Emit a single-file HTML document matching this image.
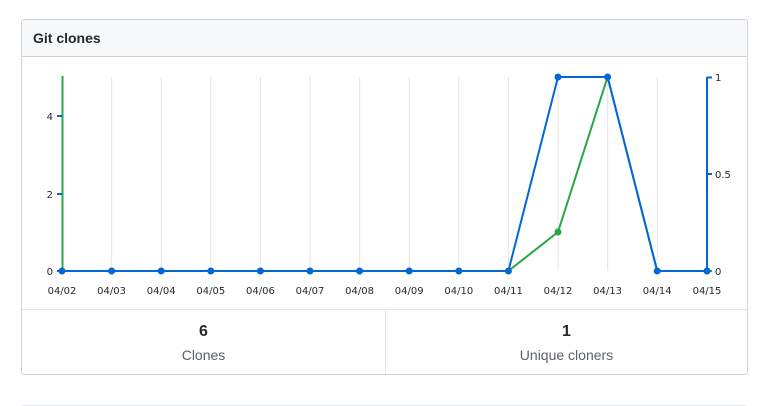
<!DOCTYPE html>
<html><head><meta charset="utf-8"><style>
body{margin:0;background:#fff;font-family:"Liberation Sans",sans-serif;}
.box{position:absolute;left:21px;top:19px;width:725px;height:354px;border:1px solid #d1d5da;border-radius:3px;overflow:hidden}
.hd{height:36px;background:#f6f8fa;border-bottom:1px solid #d1d5da;font-weight:bold;font-size:14px;color:#24292e;line-height:36px;padding-left:11px}
.stat{position:absolute;top:289px;height:65px;border-top:1px solid #e1e4e8;text-align:center;width:363px}
.stat b{display:block;font-size:16px;color:#24292e;margin-top:13px}
.stat span{display:block;font-size:14px;color:#586069;margin-top:6px}
</style></head><body>
<div class="box"><div class="hd">Git clones</div>
<div class="stat" style="left:0;border-right:1px solid #e1e4e8"><b>6</b><span>Clones</span></div>
<div class="stat" style="left:364px;width:361px"><b>1</b><span>Unique cloners</span></div>
</div>
<div style="position:absolute;left:21px;top:405px;width:726px;height:1px;background:#e1e4e8"></div>
<svg width="777" height="406" style="position:absolute;left:0;top:0" font-family="DejaVu Sans,sans-serif" font-size="10">
<g stroke="#e6e6e6" stroke-width="1">
<line x1="111.6" y1="77" x2="111.6" y2="271"/><line x1="161.2" y1="77" x2="161.2" y2="271"/><line x1="210.8" y1="77" x2="210.8" y2="271"/><line x1="260.4" y1="77" x2="260.4" y2="271"/><line x1="310" y1="77" x2="310" y2="271"/><line x1="359.6" y1="77" x2="359.6" y2="271"/><line x1="409.2" y1="77" x2="409.2" y2="271"/><line x1="458.8" y1="77" x2="458.8" y2="271"/><line x1="508.4" y1="77" x2="508.4" y2="271"/><line x1="558" y1="77" x2="558" y2="271"/><line x1="607.6" y1="77" x2="607.6" y2="271"/><line x1="657.2" y1="77" x2="657.2" y2="271"/>
</g>
<line x1="62.5" y1="76" x2="62.5" y2="271" stroke="#28a745" stroke-width="2"/>
<g stroke="#0366d6" stroke-width="2"><line x1="57" y1="116" x2="62" y2="116"/><line x1="57" y1="194" x2="62" y2="194"/><line x1="57" y1="271" x2="62" y2="271"/>
<line x1="707" y1="77" x2="707" y2="271"/><line x1="707" y1="77.5" x2="712" y2="77.5"/><line x1="707" y1="174" x2="712" y2="174"/></g>
<line x1="707" y1="271" x2="712" y2="271" stroke="#28a745" stroke-width="2"/>
<g fill="#24292e" text-anchor="end"><text x="53" y="120">4</text><text x="53" y="198">2</text><text x="53" y="275">0</text></g>
<g fill="#24292e"><text x="715" y="81">1</text><text x="715" y="178">0.5</text><text x="715" y="275">0</text></g>
<polyline fill="none" stroke="#28a745" stroke-width="2" points="508.4,271 558,232 607.6,77 657.2,271"/>
<polyline fill="none" stroke="#0366d6" stroke-width="2" points="62,271 508.4,271 558,77 607.6,77 657.2,271 707,271"/>
<g fill="#0366d6"><circle cx="62" cy="271" r="3.5"/><circle cx="111.6" cy="271" r="3.5"/><circle cx="161.2" cy="271" r="3.5"/><circle cx="210.8" cy="271" r="3.5"/><circle cx="260.4" cy="271" r="3.5"/><circle cx="310" cy="271" r="3.5"/><circle cx="359.6" cy="271" r="3.5"/><circle cx="409.2" cy="271" r="3.5"/><circle cx="458.8" cy="271" r="3.5"/><circle cx="508.4" cy="271" r="3.5"/><circle cx="558" cy="77" r="3.5"/><circle cx="607.6" cy="77" r="3.5"/><circle cx="657.2" cy="271" r="3.5"/><circle cx="707" cy="271" r="3.5"/></g>
<circle cx="558" cy="232" r="3.5" fill="#28a745"/>
<g fill="#24292e" text-anchor="middle"><text x="62" y="294">04/02</text><text x="111.6" y="294">04/03</text><text x="161.2" y="294">04/04</text><text x="210.8" y="294">04/05</text><text x="260.4" y="294">04/06</text><text x="310" y="294">04/07</text><text x="359.6" y="294">04/08</text><text x="409.2" y="294">04/09</text><text x="458.8" y="294">04/10</text><text x="508.4" y="294">04/11</text><text x="558" y="294">04/12</text><text x="607.6" y="294">04/13</text><text x="657.2" y="294">04/14</text><text x="707" y="294">04/15</text></g>
</svg>
</body></html>
